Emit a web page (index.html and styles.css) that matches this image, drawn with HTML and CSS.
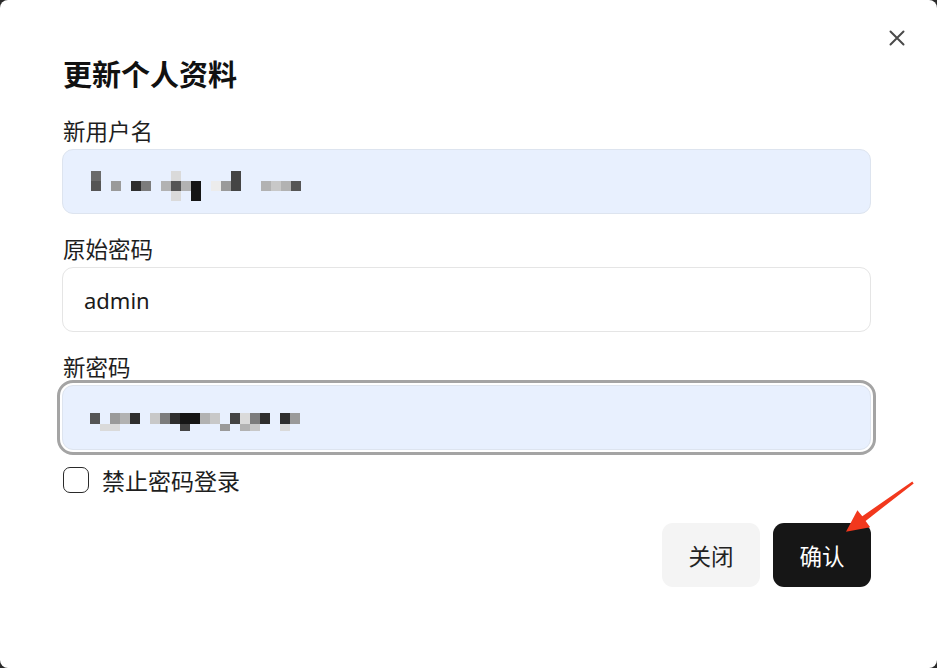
FILE: index.html
```html
<!DOCTYPE html>
<html lang="zh-CN">
<head>
<meta charset="utf-8">
<title>更新个人资料</title>
<link rel="stylesheet" href="styles.css">
</head>
<body>
<div class="dialog">
  <button class="close" aria-label="关闭">
    <svg width="16" height="16" viewBox="0 0 16 16"><path d="M1.5 1.5 L14.5 14.5 M14.5 1.5 L1.5 14.5" stroke="#4a4a4a" stroke-width="2" stroke-linecap="round" fill="none"/></svg>
  </button>
  <h1 class="title">更新个人资料</h1>

  <div class="field">
    <label class="label">新用户名</label>
    <div class="box box-fill box-m1">
      <div class="mosaic m1">
        <i class="s5"></i><i class="s4"></i><i></i>
        <i></i><i></i><i></i>
        <i></i><i class="s7"></i><i></i>
        <i></i><i></i><i></i>
        <i></i><i class="s2"></i><i></i>
        <i></i><i class="s6"></i><i></i>
        <i></i><i></i><i></i>
        <i></i><i class="s8"></i><i></i>
        <i class="s10"></i><i class="s4"></i><i class="s10"></i>
        <i></i><i class="s8"></i><i></i>
        <i></i><i class="s1"></i><i class="s1"></i>
        <i></i><i></i><i></i>
        <i></i><i class="s11"></i><i></i>
        <i></i><i class="s7"></i><i></i>
        <i class="s3"></i><i class="s3"></i><i></i>
        <i></i><i></i><i></i>
        <i></i><i></i><i></i>
        <i></i><i class="s8"></i><i></i>
        <i></i><i class="s9"></i><i></i>
        <i></i><i class="s8"></i><i></i>
        <i></i><i class="s4"></i><i></i>
      </div>
    </div>
  </div>

  <div class="field">
    <label class="label">原始密码</label>
    <div class="box box-plain"><span class="value">admin</span></div>
  </div>

  <div class="field">
    <label class="label">新密码</label>
    <div class="box box-fill box-focus box-m3">
      <div class="mosaic m3">
        <i class="s4"></i><i></i>
        <i></i><i class="s10"></i>
        <i class="s7"></i><i class="s10"></i>
        <i class="s8"></i><i></i>
        <i class="s2"></i><i></i>
        <i></i><i></i>
        <i class="s9"></i><i></i>
        <i class="s6"></i><i></i>
        <i class="s2"></i><i></i>
        <i class="s1"></i><i class="s3"></i>
        <i class="s1"></i><i></i>
        <i class="s8"></i><i></i>
        <i class="s9"></i><i></i>
        <i></i><i class="s7"></i>
        <i class="s3"></i><i></i>
        <i class="s10"></i><i class="s8"></i>
        <i class="s6"></i><i class="s9"></i>
        <i class="s2"></i><i></i>
        <i></i><i></i>
        <i class="s2"></i><i class="s10"></i>
        <i class="s7"></i><i></i>
      </div>
    </div>
  </div>

  <div class="check-row">
    <span class="checkbox"></span>
    <span class="check-label">禁止密码登录</span>
  </div>

  <div class="actions">
    <button class="btn btn-light">关闭</button>
    <button class="btn btn-dark">确认</button>
  </div>

  <svg class="arrow" viewBox="0 0 937 668" width="937" height="668">
    <polygon points="912.3,481.6 862.3,516.2 857.4,510.2 846,531.7 870.2,527.3 865.6,520.9 913.7,483.4" fill="#f2381d"/>
  </svg>
</div>
</body>
</html>
```

FILE: styles.css
```css
html, body {
  margin: 0;
  padding: 0;
  background: #2a2a2a;
}

body {
  width: 937px;
  height: 668px;
  overflow: hidden;
  font-family: "Noto Sans", "Noto Sans CJK SC", sans-serif;
  color: #1a1a1a;
}

.dialog {
  position: relative;
  box-sizing: border-box;
  width: 937px;
  height: 668px;
  background: #ffffff;
  border-radius: 8px;
  padding: 55px 66px 0 62px;
  display: flex;
  flex-direction: column;
}

.close {
  position: absolute;
  top: 30px;
  right: 32px;
  width: 16px;
  height: 16px;
  padding: 0;
  border: 0;
  background: transparent;
  display: flex;
}

.title {
  margin: 0 0 0 1px;
  font-family: "Noto Sans CJK SC", sans-serif;
  font-size: 29px;
  font-weight: 700;
  line-height: 36px;
  color: #111;
}

.field {
  display: flex;
  flex-direction: column;
  margin-top: 24px;
}

.field + .field {
  margin-top: 19px;
}

.label {
  margin-left: 1px;
  font-family: "Noto Sans CJK SC", sans-serif;
  font-size: 22.5px;
  line-height: 30px;
  color: #1e1e1e;
  margin-bottom: 4px;
}

.box {
  box-sizing: border-box;
  height: 65px;
  border-radius: 11px;
  display: flex;
}

.box-fill {
  background: #e8f0fe;
  border: 1px solid #dde4ef;
}

.box-plain {
  background: #fff;
  border: 1px solid #e5e5e5;
  align-items: center;
  padding-left: 21px;
}

.box-focus {
  outline: 3px solid #a4a4a4;
  outline-offset: 2px;
}

.box-m1 {
  padding: 21px 0 0 28px;
}

.box-m3 {
  padding: 27px 0 0 27px;
}

.value {
  font-size: 22px;
  line-height: 30px;
  color: #1a1a1a;
}

.mosaic {
  display: grid;
  grid-auto-flow: column;
  grid-auto-columns: 10px;
}

.m1 {
  grid-template-rows: repeat(3, 10px);
}

.m3 {
  grid-template-rows: 11px 7px;
}

.mosaic i { display: block; }
.s1 { background: #151515; }
.s2 { background: #2e2e2e; }
.s3 { background: #444; }
.s4 { background: #555; }
.s5 { background: #6a6a6a; }
.s6 { background: #7c7c7c; }
.s7 { background: #9a9a9a; }
.s8 { background: #b2b2b2; }
.s9 { background: #c8c8c8; }
.s10 { background: #dadada; }
.s11 { background: #ececec; }

.check-row {
  display: flex;
  align-items: center;
  margin-top: 15px;
  gap: 13px;
  margin-left: 1px;
}

.checkbox {
  box-sizing: border-box;
  width: 26px;
  height: 26px;
  border: 1.5px solid #2a2a2a;
  border-radius: 7px;
  background: #fff;
}

.check-label {
  font-family: "Noto Sans CJK SC", sans-serif;
  font-size: 23px;
  line-height: 30px;
  color: #1e1e1e;
}

.actions {
  display: flex;
  justify-content: flex-end;
  gap: 13px;
  margin-top: 28px;
}

.btn {
  width: 98px;
  height: 64px;
  border: 0;
  border-radius: 11px;
  font-family: "Noto Sans CJK SC", sans-serif;
  font-size: 22.5px;
  line-height: 30px;
  padding: 0;
}

.btn-light {
  background: #f4f4f4;
  color: #222;
}

.btn-dark {
  background: #161616;
  color: #fff;
}

.arrow {
  position: absolute;
  left: 0;
  top: 0;
  pointer-events: none;
}
```
